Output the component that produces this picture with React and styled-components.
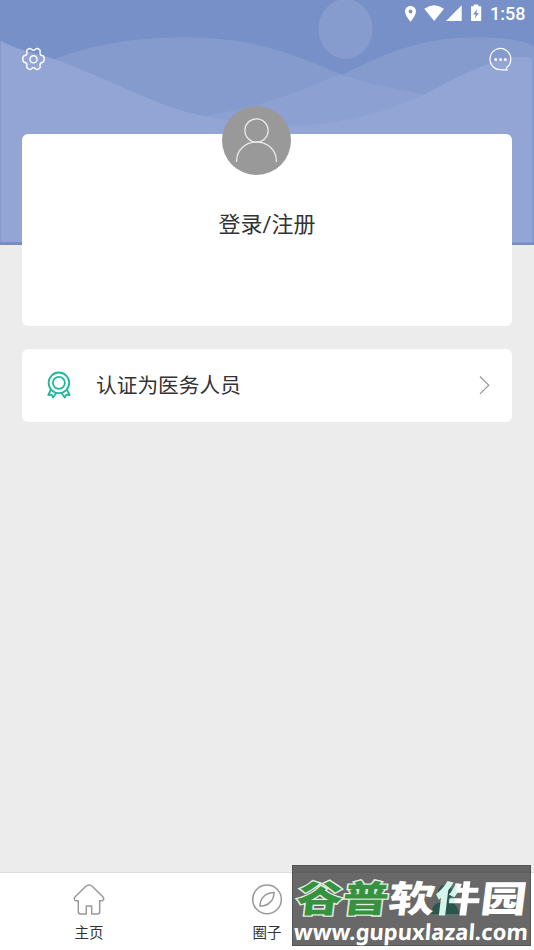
import React from "react";
import styled, { createGlobalStyle } from "styled-components";

const Global = createGlobalStyle`
  * { box-sizing: border-box; }
  body { margin: 0; font-family: Roboto, "Noto Sans CJK SC", sans-serif; color: #333; }
  svg { display: block; }
`;

const Screen = styled.div`
  width: 534px;
  height: 950px;
  display: flex;
  flex-direction: column;
  position: relative;
  overflow: hidden;
  background: #ececec;
`;

const Waves = styled.svg`
  position: absolute;
  left: 0;
  top: 0;
`;

const StatusBar = styled.div`
  position: relative;
  height: 28px;
  padding-right: 9px;
  display: flex;
  justify-content: flex-end;
  color: #fff;
`;

const Clock = styled.span`
  width: 35px;
  margin-left: 7px;
  font-size: 18px;
  font-weight: 500;
  line-height: 28px;
  white-space: nowrap;
`;

const Header = styled.header`
  position: relative;
  height: 106px;
  padding: 19px 22px 0;
  display: flex;
  justify-content: space-between;
  align-items: flex-start;
`;

const Card = styled.section`
  position: relative;
  flex: none;
  height: ${(p) => p.$height}px;
  margin: 0 22px ${(p) => p.$gap || 0}px;
  background: #fff;
  border-radius: 6px;
`;

const Avatar = styled.div`
  position: absolute;
  left: 200px;
  top: -28px;
  width: 69px;
  height: 69px;
  border-radius: 50%;
  background: #999;
`;

const Login = styled.div`
  padding-top: 75px;
  text-align: center;
  font-size: 22px;
  line-height: 32px;
`;

const Row = styled.div`
  height: 100%;
  display: flex;
  align-items: center;
  padding: 0 21px 2px 24px;
`;

const RowLabel = styled.span`
  flex: 1;
  margin-left: 24px;
  padding-top: 3px;
  font-size: 20.7px;
  line-height: 30px;
`;

const TabBar = styled.nav`
  height: 78px;
  margin-top: auto;
  display: grid;
  grid-template-columns: repeat(3, 1fr);
  background: #fff;
  border-top: 1px solid #dcdcdc;
`;

const Tab = styled.div`
  display: flex;
  flex-direction: column;
  align-items: center;
  padding-top: 10px;
  font-size: 14.5px;
  line-height: 20px;
  color: #333;
  svg { margin-bottom: 9px; }
`;

const Watermark = styled.div`
  position: absolute;
  left: 292px;
  top: 865px;
  width: 239px;
  height: 81px;
  background: rgba(54, 54, 54, 0.75);
  border: 1px solid rgba(60, 60, 60, 0.4);
`;

const Brand = styled.div`
  width: 184px;
  height: 54px;
  padding-left: 2px;
  display: flex;
  align-items: flex-end;
  font-family: "Noto Sans CJK SC", sans-serif;
  font-weight: 900;
  font-size: 36.5px;
  line-height: 46px;
  color: #fff;
  transform: skewX(-7deg) scaleX(1.26);
  transform-origin: 0 80%;
  white-space: nowrap;
`;

const Green = styled.span`
  color: #36923f;
  -webkit-text-stroke: 2.6px #e4eee4;
  paint-order: stroke fill;
`;

const Tinted = styled.span`
  color: transparent;
  background: linear-gradient(90deg, #d3f5ea 42%, #fff 46%);
  background-clip: text;
  -webkit-background-clip: text;
`;

const Site = styled.div`
  width: max-content;
  margin-top: -1px;
  padding-left: 1px;
  font-family: "Noto Sans", sans-serif;
  font-size: 22px;
  font-weight: 700;
  line-height: 24px;
  color: #fff;
  white-space: nowrap;
  transform: skewX(-4deg);
`;

const Backdrop = () => (
  <Waves width="534" height="245" viewBox="0 0 534 245">
    <path fill="#7790c8" d="M0 0h534v245H0z" />
    <ellipse cx="345.5" cy="29" rx="27" ry="30" fill="#869bce" />
    <path fill="#859bce" d="M1 110L57 58C100 43 135 37.5 185 37.5C240 37.5 280 47 340 74C370 85 400 89 425 95L400 150H1Z" />
    <path fill="#859bce" d="M267 103C325 88 355 66 390 53C425 40 448 37.5 478 37.5C502 37.5 525 40 532 46V243H220Z" />
    <path fill="#8ca1d2" d="M205 116C260 107 300 92 340 74C370 85 400 89 425 95C390 130 330 145 205 130Z" />
    <path fill="#92a5d4" d="M1 41C20 51 38 54 57 60C90 72 125 89 160 103C190 115 210 117 240 122C280 128 310 127 350 119C385 112 410 102 437 88C470 71 495 58 520 57L532 58V242H1Z" />
    <path fill="#859bce" d="M0 41h1v201H0zM532 46h2v196h-2z" />
    <path fill="#748cc0" d="M0 243h534v2H0z" />
  </Waves>
);

const Gear = () => (
  <svg width="23" height="24" viewBox="0 0 23 24" fill="none" stroke="#fff" strokeWidth="1.4" strokeLinejoin="round">
    <path d="M5 3C7 1 8.2 1.2 9.2 2.1C10.5 3.4 12.5 3.4 13.8 2.1C14.8 1.2 16 1.4 17.6 2.8C18.7 3.7 18.1 4.8 18 5.7C17.9 7.3 19 8.6 20.6 8.8C21.8 8.9 22.2 10 22.2 12C22.2 14 21.8 15 20.6 15.2C19 15.5 17.9 16.8 18 18.4C18.1 19.5 18.7 20.4 17.6 21.2C16 22.6 14.8 22.8 13.8 21.9C12.5 20.6 10.5 20.6 9.2 21.9C8.2 22.8 7 22.6 5.4 21.2C4.3 20.4 4.9 19.5 5 18.4C5.1 16.8 4 15.5 2.4 15.2C1.2 15 .8 14 .8 12C.8 10 1.2 8.9 2.4 8.8C4 8.6 5.1 7.3 5 5.7C4.9 4.6 4.3 3.8 5 3Z" />
    <circle cx="11.5" cy="12.3" r="3.6" />
  </svg>
);

const Chat = () => (
  <svg width="23" height="24" viewBox="0 0 23 24" fill="none" stroke="#fff" strokeWidth="1.2">
    <path d="M17.6 20.6A10.4 10.6 0 1 0 11.4 22.7Q14.5 23.1 18 22.9Q17.2 22 17.6 20.6" />
    <g fill="#fff" stroke="none"><circle cx="6.7" cy="12.4" r="1.5" /><circle cx="11.5" cy="12.4" r="1.5" /><circle cx="16.3" cy="12.4" r="1.5" /></g>
  </svg>
);

const StatusIcons = () => (
  <svg width="80" height="28" viewBox="403 0 80 28" fill="#fff">
    <path fillRule="evenodd" d="M410.5 6C407.3 6 405 8.4 405 11.5C405 15.5 410.5 21.7 410.5 21.7S416 15.5 416 11.5C416 8.4 413.7 6 410.5 6Zm0 3.6a1.9 1.9 0 1 1 0 3.8a1.9 1.9 0 1 1 0-3.8Z" />
    <path d="M424.3 8.7Q434 1.6 444 8.7L434.2 21Z" />
    <path d="M461.7 5.3V21H446Z" />
    <path fillRule="evenodd" d="M471 6.2h2.7V4.4h4.6v1.8h2.9V21H471Zm6 2.9l-3.9 5.4h2.5l-.7 4.1l4-5.7h-2.5Z" />
  </svg>
);

const Person = () => (
  <svg width="69" height="69" viewBox="0 0 69 69" fill="none" stroke="#ececec" strokeWidth="1.3">
    <circle cx="34.5" cy="24.5" r="11.6" />
    <path d="M14.5 56C14.5 43 24 36.2 34.5 36.2S54.5 43 54.5 56" />
  </svg>
);

const Badge = () => (
  <svg width="26" height="28" viewBox="0 0 26 28" fill="none" stroke="#1fb89f" strokeWidth="1.8" strokeLinejoin="round">
    <circle cx="12.9" cy="11.8" r="10.3" />
    <circle cx="12.9" cy="11.8" r="6" />
    <path d="M5 18.5L2.2 24l3.3-.4l1.6 2.9l3.3-4.8M20.8 18.5l2.8 5.5l-3.3-.4l-1.6 2.9l-3.3-4.8" />
  </svg>
);

const Arrow = () => (
  <svg width="12" height="20" viewBox="0 0 12 20" fill="none" stroke="#999" strokeWidth="1.2">
    <path d="M1 1.5L9.8 10.2L1 18.9" />
  </svg>
);

const Home = () => (
  <svg width="32" height="32" viewBox="0 0 32 32" fill="none" stroke="#999" strokeWidth="1.5" strokeLinejoin="round">
    <path d="M12.8 2.8Q16 .1 19.2 2.8L29.8 13.2C31.5 15 30.6 17.3 28.2 17.3H26.7V28Q26.7 30.5 24.3 30.5H18.7V22.6H13.3V30.5H7.7Q5.3 30.5 5.3 28V17.3H3.8C1.4 17.3.5 15 2.2 13.2Z" transform="translate(0 .5)" />
  </svg>
);

const Compass = () => (
  <svg width="32" height="32" viewBox="0 0 32 32" fill="none" stroke="#999" strokeWidth="1.5">
    <circle cx="16" cy="16.4" r="14.3" />
    <path d="M23.1 9.4C15 9.6 8.8 14.9 9 23C17 23.4 23 17.5 23.1 9.4Z" />
  </svg>
);

const Me = () => (
  <svg width="32" height="32" viewBox="0 0 32 32" fill="#00b894">
    <path d="M9 9a7 7 0 0 1 14 0c0 4-1.5 6.4-3.5 8v2C25 20 29 22 30 31H2C3 22 7 20 12.5 19v-2C10.5 15.4 9 13 9 9Z" />
  </svg>
);

export default function App() {
  return (
    <Screen>
      <Global />
      <Backdrop />
      <StatusBar><StatusIcons /><Clock>1:58</Clock></StatusBar>
      <Header><Gear /><Chat /></Header>
      <Card $height={192} $gap={23}>
        <Avatar><Person /></Avatar>
        <Login>登录/注册</Login>
      </Card>
      <Card $height={73}>
        <Row><Badge /><RowLabel>认证为医务人员</RowLabel><Arrow /></Row>
      </Card>
      <TabBar>
        <Tab><Home />主页</Tab>
        <Tab><Compass />圈子</Tab>
        <Tab><Me /></Tab>
      </TabBar>
      <Watermark>
        <Brand><Green>谷普</Green><span>软</span><Tinted>件</Tinted><span>园</span></Brand>
        <Site>www.gupuxlazal.com</Site>
      </Watermark>
    </Screen>
  );
}
